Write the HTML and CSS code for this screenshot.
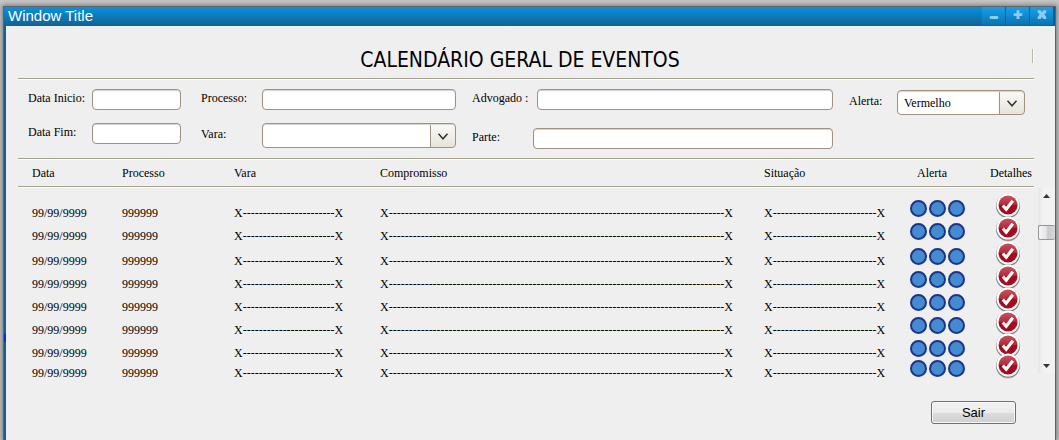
FILE: index.html
```html
<!DOCTYPE html>
<html lang="pt-BR">
<head>
<meta charset="utf-8">
<title>Calendário Geral de Eventos</title>
<link rel="stylesheet" href="styles.css">
</head>
<body>
<svg class="defs" aria-hidden="true">
  <defs>
    <linearGradient id="red" x1="0" y1="0" x2="0" y2="1">
      <stop offset="0" stop-color="#c8525f"/><stop offset=".48" stop-color="#b52a3a"/><stop offset=".52" stop-color="#a50b1e"/><stop offset="1" stop-color="#a80a1c"/>
    </linearGradient>
    <symbol id="check" viewBox="0 0 24 26">
      <circle cx="12" cy="13.6" r="12" fill="#000" opacity=".2"/>
      <circle cx="12" cy="12.8" r="12" fill="#000" opacity=".35"/>
      <circle cx="12" cy="12" r="11.500" fill="#fff"/>
      <circle cx="12" cy="12" r="9.500" fill="url(#red)"/>
      <path d="M6.8 12.4l3.4 3.9 6.6-8.6" fill="none" stroke="#fff" stroke-width="3.1"/>
    </symbol>
  </defs>
</svg>
<div class="window">
  <header class="titlebar">
    <span class="caption">Window Title</span>
    <div class="controls">
      <button type="button" aria-label="Minimizar"><svg viewBox="0 0 24 18"><rect x="8" y="9" width="9" height="3" rx="1"/></svg></button>
      <button type="button" aria-label="Maximizar"><svg viewBox="0 0 24 18"><path d="M11 3h3v3h3v3h-3v3h-3V9H8V6h3z"/></svg></button>
      <button type="button" aria-label="Fechar"><svg viewBox="0 0 24 18"><path d="M8 3h3l1.500 2L14 3h3v2l-2 2.500L17 10v2h-3l-1.500-2L11 12H8v-2l2-2.500L8 5z"/></svg></button>
    </div>
  </header>
  <main class="content">
    <div class="heading"><h1>CALENDÁRIO GERAL DE EVENTOS</h1><span class="divider"></span></div>
    <form class="filters">
      <div class="column dates">
        <div class="field"><label for="inicio">Data Inicio:</label><input id="inicio" type="text"></div>
        <div class="field"><label for="fim">Data Fim:</label><input id="fim" type="text"></div>
      </div>
      <div class="column court">
        <div class="field"><label for="processo">Processo:</label><input id="processo" type="text"></div>
        <div class="field"><label for="vara">Vara:</label><select id="vara"><option></option></select></div>
      </div>
      <div class="column people">
        <div class="field"><label for="advogado">Advogado :</label><input id="advogado" type="text"></div>
        <div class="field"><label class="short" for="parte">Parte:</label><input id="parte" type="text"></div>
      </div>
      <div class="column alert">
        <div class="field"><label for="alerta">Alerta:</label><select id="alerta"><option>Vermelho</option></select></div>
      </div>
    </form>
    <div class="results">
      <table>
        <colgroup><col class="c-data"><col class="c-processo"><col class="c-vara"><col><col class="c-vara"><col class="c-alerta"><col class="c-detalhes"></colgroup>
        <thead><tr><th>Data</th><th>Processo</th><th>Vara</th><th>Compromisso</th><th>Situação</th><th class="lead">Alerta</th><th>Detalhes</th></tr></thead>
        <tbody id="rows"></tbody>
      </table>
      <div class="scrollbar">
        <button type="button" aria-label="Subir"><svg viewBox="0 0 17 17"><path d="M5 11l3.500-4 3.500 4z"/></svg></button>
        <div class="track"><div class="thumb"></div></div>
        <button type="button" aria-label="Descer"><svg viewBox="0 0 17 17"><path d="M5 7h7l-3.500 4z"/></svg></button>
      </div>
    </div>
    <footer><button type="button" class="exit">Sair</button></footer>
  </main>
  <span class="marker"></span>
</div>
<script src="rows.js"></script>
</body>
</html>
```
FILE: rows.js
```js
const field = (n) => "X" + "-".repeat(n) + "X";
const spacing = ["", "loose", "", "", "", "", "tight", "tight"];
document.getElementById("rows").innerHTML = spacing.map((name) => `
  <tr class="${name}">
    <td>99/99/9999</td><td>999999</td><td>${field(23)}</td><td>${field(84)}</td><td>${field(26)}</td>
    <td class="lights"><div><i></i><i></i><i></i></div></td>
    <td class="details"><button type="button" aria-label="Detalhes"><svg><use href="#check"/></svg></button></td>
  </tr>`).join("");
```
FILE: styles.css
```css
* { box-sizing: border-box; }
body {
  margin: 0;
  padding: 6px 3px 0;
  min-height: 100vh;
  display: flex;
  overflow: hidden;
  background: #c6c6c6;
  font: 12px/14px "Liberation Serif", "Times New Roman", serif;
  color: #000;
}
.defs { position: absolute; width: 0; height: 0; }
button, input, select { font: inherit; color: inherit; margin: 0; padding: 0; border: 0; }

.window {
  position: relative;
  flex: 1;
  display: flex;
  flex-direction: column;
  background: #efefef;
  border: 1px solid #626262;
  border-bottom: 0;
  box-shadow: 0 0 5px 1px #777;
}
.titlebar {
  display: flex;
  height: 19px;
  background: linear-gradient(#0592e0, #14618f);
}
.caption {
  flex: 1;
  padding-left: 4px;
  font: 15px/17px "Liberation Sans", Arial, sans-serif;
  color: #fff;
}
.controls { display: flex; gap: 1px; padding-right: 2px; height: 18px; background: #075c92; }
.controls button { width: 23px; background: linear-gradient(#15a0ec, #0a73b0); }
.controls svg { display: block; width: 23px; height: 18px; fill: #8dcbf0; }
.content { flex: 1; border-left: 2px solid #14618f; padding-left: 12px; }

.heading {
  display: flex;
  align-items: center;
  height: 52px;
  margin-right: 21px;
  padding-top: 16px;
}
h1 {
  flex: 1;
  margin: 0;
  padding-right: 10px;
  text-align: center;
  font: 21px/26px "DejaVu Sans Condensed", Tahoma, sans-serif;
}
.divider { width: 2px; height: 14px; margin-bottom: 8px; background: linear-gradient(90deg, #b9b89e 50%, #fff 50%); }

.filters {
  display: flex;
  gap: 16px;
  height: 80px;
  margin-right: 21px;
  padding: 9px 9px 0 10px;
  border-top: 1px solid #a5a38f;
  box-shadow: inset 0 1px #fff;
}
.column { display: flex; flex-direction: column; gap: 13px; padding-top: 1px; }
.field { display: flex; align-items: center; }
.field label { flex: none; padding-bottom: 4px; }
.field input, .field select {
  flex: 1;
  min-width: 0;
  height: 21px;
  background: #fff;
  border: 1px solid #a0927f;
  border-radius: 4px;
  box-shadow: inset 0 1px 1px #d5d3cc;
}
.field select {
  height: 25px;
  padding-left: 6px;
  appearance: none;
  background:
    url("data:image/svg+xml,%3Csvg xmlns='http://www.w3.org/2000/svg' width='24' height='24'%3E%3Cpath d='M7.500 10l4.500 5 4.500-5' fill='none' stroke='%23333' stroke-width='1.500'/%3E%3C/svg%3E") right center no-repeat,
    linear-gradient(#a0927f, #a0927f) right 24px top 0 / 1px 100% no-repeat,
    linear-gradient(#fbfaf8, #e6e3da) right top / 24px 100% no-repeat,
    #fff;
}
.dates { width: 153px; margin-right: 4px; }
.dates label { width: 64px; }
.court { width: 255px; }
.court label { width: 61px; }
.people { flex: 1; gap: 18px; }
.people label { width: 65px; }
.people .short { width: 61px; }
.alert { width: 176px; padding-top: 2px; }
.alert label { width: 48px; }

.results { display: flex; gap: 4px; align-items: flex-start; }
table { flex: 1; width: 100%; table-layout: fixed; border-collapse: separate; border-spacing: 0; }
.c-data { width: 104px; }
.c-processo { width: 112px; }
.c-vara { width: 146px; }
.c-alerta { width: 80px; }
.c-detalhes { width: 44px; }
th, td { padding: 0; text-align: left; vertical-align: top; white-space: nowrap; }
th:first-child, td:first-child { padding-left: 14px; }
th {
  height: 29px;
  padding-top: 7px;
  font-weight: normal;
  border-top: 1px solid #a5a38f;
  border-bottom: 1px solid #a5a38f;
  box-shadow: inset 0 1px #fff, 0 1px #fff;
}
th.lead { padding-left: 7px; }
tbody::before { content: ""; display: table-row; height: 13px; }
td { height: 23px; padding-top: 6px; }
.loose td { height: 25px; }
.tight td { height: 20px; }
td.lights, td.details { padding-top: 0; }
.lights div { display: flex; gap: 2px; }
.lights i { width: 17px; height: 17px; border: 2px solid #1c3588; border-radius: 50%; background: #448bd2; }
.details button { display: block; width: 24px; height: 26px; margin: -7px 0 -7px 6px; background: none; }
.details svg { display: block; width: 24px; height: 26px; }

.scrollbar {
  display: flex;
  flex-direction: column;
  width: 17px;
  height: 187px;
  margin-top: 29px;
  background: linear-gradient(90deg, #e6e6e6, #f2f2f2 30%, #f2f2f2);
}
.scrollbar button { height: 17px; background: none; }
.scrollbar svg { display: block; width: 17px; height: 17px; fill: #333; }
.track { flex: 1; padding-top: 21px; }
.thumb {
  height: 15px;
  border: 1px solid #959595;
  border-right: 0;
  border-radius: 2px;
  background: linear-gradient(90deg, #f6f6f6, #e4e4e8 45%, #cacace 55%, #d8d8dc);
}
footer { display: flex; justify-content: flex-end; padding: 21px 39px 0 0; }
.exit {
  width: 85px;
  height: 23px;
  border: 1px solid #707070;
  border-radius: 3px;
  background: linear-gradient(#f2f2f2, #ebebeb 50%, #dddddd 50%, #cfcfcf);
  box-shadow: inset 0 0 0 1px #f8f8f8;
  font: 13px/21px "Liberation Sans", Arial, sans-serif;
}
.marker { position: absolute; left: 0; top: 327px; width: 2px; height: 8px; background: #0b2bdc; }
```
